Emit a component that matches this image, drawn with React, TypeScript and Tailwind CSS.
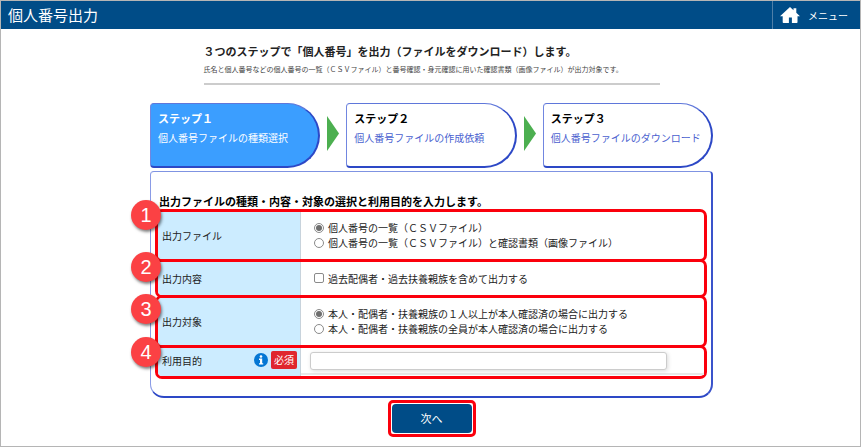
import type { ReactNode } from "react";

const choice =
  "size-[10px] shrink-0 appearance-none border border-[#8a8a8a] bg-white bg-clip-content p-px checked:bg-[#6e6e6e]";

function HomeIcon() {
  return (
    <svg viewBox="0 0 20 16" className="h-4 w-5" fill="#fff" aria-hidden="true">
      <path d="M10 0 13.5 3.2V1.2H16.3V5.8L20 9.3H17.5V15.2Q17.5 16 16.7 16H11.9V10.6H8.9V16H3.5Q2.7 16 2.7 15.2V9.3H0Z" />
    </svg>
  );
}

function InfoIcon() {
  return (
    <svg viewBox="0 0 14 14" className="size-[14px]" aria-hidden="true">
      <circle cx="7" cy="7" r="7" fill="#0577d4" />
      <circle cx="7" cy="3.5" r="1.3" fill="#fff" />
      <path d="M5 5.6H8.2V10.2H9.2V11.5H5V10.2H6V6.9H5Z" fill="#fff" />
    </svg>
  );
}

function Step({ title, text, active }: { title: string; text: string; active?: boolean }) {
  return (
    <li
      className={`h-[65px] flex-1 rounded-l-[4px] rounded-r-[33px] border border-r-2 border-b-2 border-t-[#5f77da] border-r-[#2d48c6] border-b-[#2d48c6] border-l-[#7186e0] px-[7px] pt-[6px] ${
        active ? "bg-[#3b9eff] text-white" : "bg-white text-black"
      }`}
      aria-current={active ? "step" : undefined}
    >
      <p className="text-[11px] leading-4 font-bold text-black">
        <span className={active ? "text-white" : "text-black"}>{title}</span>
      </p>
      <p className={`mt-1 text-[10px] leading-4 whitespace-nowrap ${active ? "text-white" : "text-[#4a5fcf]"}`}>
        {text}
      </p>
    </li>
  );
}

function Arrow() {
  return (
    <li aria-hidden="true" className="mx-[7px] mt-[13px]">
      <svg viewBox="0 0 12 35" className="h-[35px] w-3">
        <path d="M0 0 12 17.5 0 35Z" fill="#4caf50" />
      </svg>
    </li>
  );
}

type RowProps = {
  number: number;
  badgeTop: string;
  height: string;
  label: ReactNode;
  children: ReactNode;
};

function Row({ number, badgeTop, height, label, children }: RowProps) {
  return (
    <div className={`relative -mt-[3px] flex rounded-[7px] border-[3px] border-[#fb000c] ${height}`}>
      <span
        className={`absolute -left-[27px] z-10 flex size-[30px] items-center justify-center rounded-full bg-[#fb4144] font-['Liberation_Sans',sans-serif] text-[20px] leading-none text-white shadow-[1px_2px_3px_rgba(0,0,0,0.5)] ${badgeTop}`}
      >
        {number}
      </span>
      <div className="flex w-[143px] shrink-0 items-center rounded-l-[4px] border-r border-[#c8d3dc] bg-[#ccecff] pr-[3px] pb-px pl-1">
        {label}
      </div>
      <div className="flex min-w-0 flex-1 flex-col justify-center pb-px">{children}</div>
    </div>
  );
}

function Radio({ name, text, checked }: { name: string; text: string; checked?: boolean }) {
  return (
    <label className="flex items-center gap-1 pl-[13px] leading-[15px]">
      <input type="radio" name={name} defaultChecked={checked} className={`${choice} rounded-full`} />
      {text}
    </label>
  );
}

export default function App() {
  return (
    <div className="min-h-screen border border-[#b5b5b5] bg-white font-['Noto_Sans_CJK_JP',sans-serif] text-[10px] text-[#222]">
      <header className="flex h-7 items-stretch justify-between bg-[#004c87] text-white">
        <h1 className="pl-[7px] text-[15px] leading-[27px]">個人番号出力</h1>
        <a href="#menu" className="flex items-center gap-2 border-l border-[#4f7fa8] pr-3 pl-[7px] text-[10px]">
          <HomeIcon />
          メニュー
        </a>
      </header>

      <main className="pl-0.5">
        <section className="mx-auto max-w-[456px] border-b-2 border-[#ccc] pt-[14px] pb-[9px] whitespace-nowrap">
          <h2 className="text-[11px] leading-4 font-bold">
            ３つのステップで「個人番号」を出力（ファイルをダウンロード）します。
          </h2>
          <p className="mt-[5px] text-[7px] leading-[10px] text-[#444]">
            氏名と個人番号などの個人番号の一覧（ＣＳＶファイル）と番号確認・身元確認に用いた確認書類（画像ファイル）が出力対象です。
          </p>
        </section>

        <form className="mx-auto mt-[18px] max-w-[563px]" onSubmit={(e) => e.preventDefault()}>
          <ol className="flex">
            <Step title="ステップ１" text="個人番号ファイルの種類選択" active />
            <Arrow />
            <Step title="ステップ２" text="個人番号ファイルの作成依頼" />
            <Arrow />
            <Step title="ステップ３" text="個人番号ファイルのダウンロード" />
          </ol>

          <section className="mt-[3px] rounded-t-[4px] rounded-b-[14px] border border-r-2 border-b-2 border-t-[#7f93e2] border-r-[#3a53cb] border-b-[#2d48c6] border-l-[#8a9be6] px-1 pt-[21px] pb-[17px]">
            <h3 className="mb-[3px] px-1 text-[11px] leading-4 font-bold text-black">
              出力ファイルの種類・内容・対象の選択と利用目的を入力します。
            </h3>

            <Row number={1} badgeTop="-top-3" height="h-[53px]" label={<span id="file-label">出力ファイル</span>}>
              <div role="radiogroup" aria-labelledby="file-label">
                <Radio name="file" text="個人番号の一覧（ＣＳＶファイル）" checked />
                <Radio name="file" text="個人番号の一覧（ＣＳＶファイル）と確認書類（画像ファイル）" />
              </div>
            </Row>

            <Row number={2} badgeTop="-top-[10px]" height="h-[39px]" label={<span>出力内容</span>}>
              <label className="flex items-center gap-1 pl-[13px] leading-[15px]">
                <input type="checkbox" className={`${choice} rounded-[2px]`} />
                過去配偶者・過去扶養親族を含めて出力する
              </label>
            </Row>

            <Row number={3} badgeTop="-top-1" height="h-[53px]" label={<span id="target-label">出力対象</span>}>
              <div role="radiogroup" aria-labelledby="target-label">
                <Radio name="target" text="本人・配偶者・扶養親族の１人以上が本人確認済の場合に出力する" checked />
                <Radio name="target" text="本人・配偶者・扶養親族の全員が本人確認済の場合に出力する" />
              </div>
            </Row>

            <Row
              number={4}
              badgeTop="-top-[11px]"
              height="h-[34px]"
              label={
                <div className="flex flex-1 items-center pb-[3px]">
                  <label htmlFor="purpose" className="flex-1">
                    利用目的
                  </label>
                  <InfoIcon />
                  <span className="ml-[3px] rounded-[2px] bg-[#e0262e] px-[3px] text-[10px] leading-[18px] text-white">
                    必須
                  </span>
                </div>
              }
            >
              <div className="flex h-full items-center border-b-2 border-[#e8e8e8] pr-[37px] pl-[9px]">
                <input
                  id="purpose"
                  type="text"
                  className="h-[18px] w-full rounded-[3px] border border-[#ccc] bg-white px-1 shadow-[1px_1px_4px_rgba(0,0,0,0.15)]"
                />
              </div>
            </Row>
          </section>

          <div className="mx-auto mt-0.5 w-fit rounded-[5px] border-[3px] border-[#fb000c] p-px">
            <button type="submit" className="block h-[29px] w-20 rounded-[4px] bg-[#004c87] text-[11px] text-white">
              次へ
            </button>
          </div>
        </form>
      </main>
    </div>
  );
}
